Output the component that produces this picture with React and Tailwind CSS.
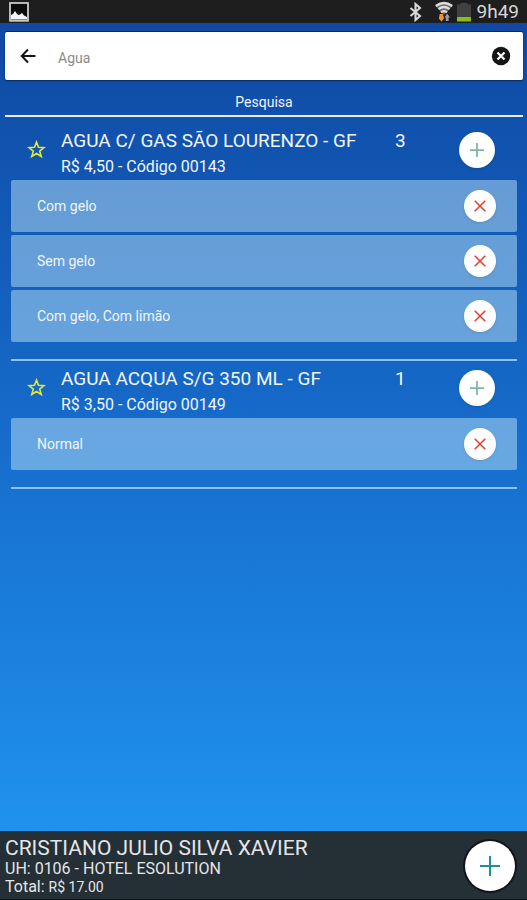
import { useState } from 'react';

const PRODUCTS = [
  {
    code: '00143',
    name: 'AGUA C/ GAS SÃO LOURENZO - GF',
    price: '4,50',
    options: ['Com gelo', 'Sem gelo', 'Com gelo, Com limão'],
  },
  {
    code: '00149',
    name: 'AGUA ACQUA S/G 350 ML - GF',
    price: '3,50',
    options: ['Normal'],
  },
];

function PlusIcon({ className, strokeWidth = 2 }) {
  return (
    <svg viewBox="0 0 20 20" className={className} stroke="currentColor" strokeWidth={strokeWidth} fill="none">
      <path d="M10 0v20M0 10h20" />
    </svg>
  );
}

function StatusBar() {
  return (
    <div className="flex h-[23px] items-center justify-between bg-[#1e1e1e] pl-[9px] pr-2 text-[#d6d6d6]">
      <svg viewBox="0 0 20 20" className="h-5 w-5" fill="none">
        <rect x="1" y="1" width="18" height="17.800" fill="#0c0c0c" stroke="#c9c9c9" strokeWidth="1.800" />
        <path d="M2 17.500v-4.500l2-1 2-3 2 3 1.500 1 1.500-.5 2-1.500 2 2.500 3 1.500v2.500z" fill="#f4f4f4" />
      </svg>
      <div className="flex items-center">
        {/* Bluetooth */}
        <svg viewBox="0 0 14 20" className="mr-3 h-5 w-3.5" stroke="#d8d8d8" strokeWidth="2.100" fill="none">
          <path d="M1.500 6l9.500 8-4.500 4V2L11 6l-9.500 8" />
        </svg>
        {/* Wi-Fi with traffic arrows */}
        <svg viewBox="0 0 18 22" className="mr-1 h-[22px] w-[18px]" fill="none">
          <path d="M.5 5Q9-1.500 17.500 5L9 14z" fill="#6a6a6a" />
          <path d="M.8 5Q9-1 17.200 5M3.500 8.200Q9 3.800 14.500 8.200M6 11.300Q9 8.800 12 11.300" stroke="#dedede" strokeWidth="2.200" />
          <path d="M6.500 20.500L3.800 17.500 4.800 13h3l1.200 4.500z" fill="#f0962e" />
          <path d="M12.200 12.500l2.800 4h-1.400V20h-2.800v-3.500H9.400z" fill="#9a9a9a" />
        </svg>
        {/* Battery */}
        <svg viewBox="0 0 14 20" className="mr-1.5 h-5 w-3.5">
          <path d="M3.500 1h7v1.500H14V16H0V2.500h3.500z" fill="#414141" />
          <path d="M0 15h14v4.500H0z" fill="#86bd1b" />
        </svg>
        <span className="text-[19px] leading-6">9h49</span>
      </div>
    </div>
  );
}

function SearchBar({ value, onChange }) {
  return (
    <div className="ml-[5px] mr-1 mt-[9px] flex h-12 items-center rounded-xs bg-white pl-[15px] pr-3 shadow-[0_1px_2px_rgba(0,0,0,0.5),0_-1px_0_#0519a0]">
      <button type="button" aria-label="Voltar" className="text-[#151515]">
        <svg viewBox="0 0 16 16" className="h-4 w-4" fill="none" stroke="currentColor" strokeWidth="2">
          <path d="M8 1.500L1.700 8 8 14.500M2 8h13.500" />
        </svg>
      </button>
      <input
        type="text"
        aria-label="Pesquisa"
        value={value}
        onChange={(e) => onChange(e.target.value)}
        className="ml-[22px] min-w-0 flex-1 pt-1 text-sm text-[#8a8a8a] outline-none"
      />
      <button type="button" aria-label="Limpar" onClick={() => onChange('')}>
        <svg viewBox="0 0 20 20" className="h-5 w-5" fill="none">
          <circle cx="10" cy="10" r="9.200" fill="#151515" />
          <path d="M6.500 6.500l7 7M13.500 6.500l-7 7" stroke="#fff" strokeWidth="2.200" />
        </svg>
      </button>
    </div>
  );
}

function OptionRow({ label }) {
  return (
    <li className="flex h-[52px] items-center justify-between rounded-xs bg-[#bae2f8]/50 pl-[26px] pr-[21px]">
      <span className="text-sm">{label}</span>
      <button
        type="button"
        aria-label={`Remover ${label}`}
        className="flex h-8 w-8 items-center justify-center rounded-full bg-white text-[#e83a30] shadow-sm"
      >
        <svg viewBox="0 0 12 12" className="h-3 w-3" fill="none" stroke="currentColor" strokeWidth="1.500">
          <path d="M.7.7l10.600 10.600M11.300.7L.7 11.300" />
        </svg>
      </button>
    </li>
  );
}

function Product({ product }) {
  return (
    <section className="border-b-2 border-[#8dc4f5] pb-[17px]">
      <div className="flex h-[57px] items-center pb-1 pl-4 pr-[22px]">
        <button type="button" aria-label="Favorito" className="w-[34px] shrink-0">
          <svg viewBox="0 0 20 20" className="h-[19px] w-[19px]" fill="none" stroke="#dfe83f" strokeWidth="1.700">
            <path d="M10 2.200l2.100 5.500 5.900.3-4.600 3.700 1.600 5.700-5-3.200-5 3.200 1.600-5.700L2 8l5.900-.3z" />
          </svg>
        </button>
        <div className="min-w-0 flex-1 self-start pt-1">
          <h2 className="text-[19px] leading-7">{product.name}</h2>
          <p className="text-base leading-6">
            R$ {product.price} - Código {product.code}
          </p>
        </div>
        <span className="w-16 self-start pt-1 text-[19px] leading-7">{product.options.length}</span>
        <button
          type="button"
          aria-label={`Adicionar ${product.name}`}
          className="flex h-9 w-9 items-center justify-center rounded-full bg-white text-[#7db6a4] shadow-sm"
        >
          <PlusIcon className="h-3.5 w-3.5" strokeWidth={2.5} />
        </button>
      </div>
      <ul className="flex flex-col gap-[3px]">
        {product.options.map((option) => (
          <OptionRow key={option} label={option} />
        ))}
      </ul>
    </section>
  );
}

export default function App() {
  const [query, setQuery] = useState('Agua');

  return (
    <div className="flex min-h-screen flex-col bg-[#252f36] font-[Roboto,sans-serif] text-[#f0f5fc]">
      <StatusBar />

      <main className="flex flex-1 flex-col bg-linear-to-b from-[#0f49a3] via-[#166bca] to-[#2092ee]">
        <SearchBar value={query} onChange={setQuery} />
        <h1 className="ml-[5px] mr-1 mt-3 border-b-2 border-[#e4edfb] pb-[3px] text-center text-sm leading-5">
          Pesquisa
        </h1>
        <div className="mt-1.5 flex flex-col pl-[11px] pr-2.5">
          {PRODUCTS.map((product) => (
            <Product key={product.code} product={product} />
          ))}
        </div>
      </main>

      <footer className="flex items-center justify-between border-b border-[#14141f] pb-[3px] pl-[5px] pr-3 pt-[5px] text-[#e4e6e8]">
        <div>
          <p className="text-[21px] leading-6">CRISTIANO JULIO SILVA XAVIER</p>
          <p className="text-base leading-[18px]">UH: 0106 - HOTEL ESOLUTION</p>
          <p className="text-base leading-[18px]">
            Total: <span className="text-sm/[18px]">R$ 17.00</span>
          </p>
        </div>
        <button
          type="button"
          aria-label="Novo pedido"
          className="flex h-[50px] w-[50px] shrink-0 items-center justify-center rounded-full bg-white text-[#1d9095] ring-2 ring-[#10151a]"
        >
          <PlusIcon className="h-5 w-5" />
        </button>
      </footer>
    </div>
  );
}
